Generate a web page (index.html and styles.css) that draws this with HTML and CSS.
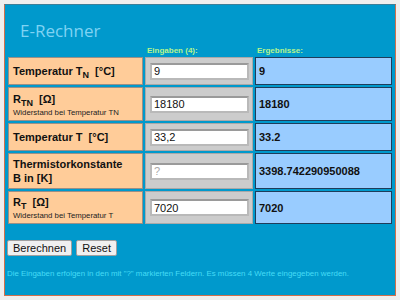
FILE: index.html
```html
<!DOCTYPE html>
<html lang="de">
<head>
  <meta charset="UTF-8">
  <title>E-Rechner</title>
  <link rel="stylesheet" href="styles.css">
</head>
<body>
  <div class="panel">
    <h1>E-Rechner</h1>

    <table class="calc">
      <colgroup>
        <col class="col-label">
        <col class="col-input">
        <col class="col-result">
      </colgroup>
      <thead>
        <tr>
          <th></th>
          <th>Eingaben (4):</th>
          <th>Ergebnisse:</th>
        </tr>
      </thead>
      <tbody>
        <tr class="row-1">
          <td class="label"><b>Temperatur T<sub>N</sub>&nbsp; [°C]</b></td>
          <td class="input"><input type="text" value="9"></td>
          <td class="result">9</td>
        </tr>
        <tr class="row-2">
          <td class="label">
            <b>R<sub>TN</sub>&nbsp; [Ω]</b>
            <span class="hint">Widerstand bei Temperatur TN</span>
          </td>
          <td class="input"><input type="text" value="18180"></td>
          <td class="result">18180</td>
        </tr>
        <tr class="row-3">
          <td class="label"><b>Temperatur T&nbsp; [°C]</b></td>
          <td class="input"><input type="text" value="33,2"></td>
          <td class="result">33.2</td>
        </tr>
        <tr class="row-4">
          <td class="label"><b>Thermistorkonstante<br>B in [K]</b></td>
          <td class="input"><input type="text" placeholder="?"></td>
          <td class="result">3398.742290950088</td>
        </tr>
        <tr class="row-5">
          <td class="label">
            <b>R<sub>T</sub>&nbsp; [Ω]</b>
            <span class="hint">Widerstand bei Temperatur T</span>
          </td>
          <td class="input"><input type="text" value="7020"></td>
          <td class="result">7020</td>
        </tr>
      </tbody>
    </table>

    <div class="actions">
      <button type="button">Berechnen</button>
      <button type="button">Reset</button>
    </div>

    <p class="note">Die Eingaben erfolgen in den mit "?" markierten Feldern. Es müssen 4 Werte eingegeben werden.</p>
  </div>
</body>
</html>
```

FILE: styles.css
```css
body {
  margin: 0;
  padding: 4px;
  background-color: #f1efee;
  font-family: "Liberation Sans", Arial, sans-serif;
}
.panel {
  height: 290px;
  background-color: #0099cc;
  border: 1px solid #d0704c;
  border-top-color: #3d7f99;
}
h1 {
  margin: 16px 0 0 15px;
  font-family: "Open Sans", sans-serif;
  font-size: 17px;
  font-weight: normal;
  line-height: 20px;
  color: #7fd3f3;
}
.calc {
  margin-left: 1px;
  width: 388px;
  table-layout: fixed;
  border-collapse: separate;
  border-spacing: 2px;
}
.col-label {
  width: 135px;
}
.col-input {
  width: 108px;
}
.col-result {
  width: 137px;
}
th {
  height: 12px;
  padding: 0 0 0 2px;
  font-size: 8px;
  font-weight: bold;
  text-align: left;
  vertical-align: bottom;
  color: #b6f58c;
}
td {
  padding: 0;
  border: 1px solid #2d5570;
  font-size: 11px;
  vertical-align: middle;
}
.row-1 { height: 28px; }
.row-2 { height: 34px; }
.row-3 { height: 28px; }
.row-4 { height: 36px; }
.row-5 { height: 33px; }
.label {
  padding-left: 4px;
  background-color: #ffcc99;
  border-color: #9a8f86;
  color: #111;
}
.label b {
  line-height: 14px;
}
sub {
  font-size: 9px;
  line-height: 0;
}
.hint {
  display: block;
  margin-top: 2px;
  font-size: 7.8px;
  line-height: 9px;
  color: #222;
}
.input {
  padding-left: 4px;
  background-color: #cccccc;
  border-color: #a9a9a9;
}
.input input {
  display: block;
  box-sizing: border-box;
  width: 99px;
  height: 17px;
  padding: 0 2px;
  border: 2px solid #b9b9b9;
  border-top-color: #9a9a9a;
  background: #fff;
  font-family: "Liberation Sans", Arial, sans-serif;
  font-size: 11px;
  color: #111;
}
.input input::placeholder {
  color: #a8a8a8;
}
.result {
  padding-left: 3px;
  background-color: #99ccff;
  border-color: #1f3c5a;
  font-weight: bold;
  color: #111;
}
.actions {
  display: flex;
  gap: 4px;
  margin: 14px 0 0 2px;
}
button {
  padding: 0 5px;
  height: 16px;
  border: 1px solid #a0a0a0;
  border-radius: 2px;
  background-color: #f0f0f0;
  font-family: "Liberation Sans", Arial, sans-serif;
  font-size: 11px;
  line-height: 13px;
  color: #111;
}
.note {
  margin: 13px 0 0 2px;
  font-size: 7.9px;
  color: #46dcf6;
}
```
